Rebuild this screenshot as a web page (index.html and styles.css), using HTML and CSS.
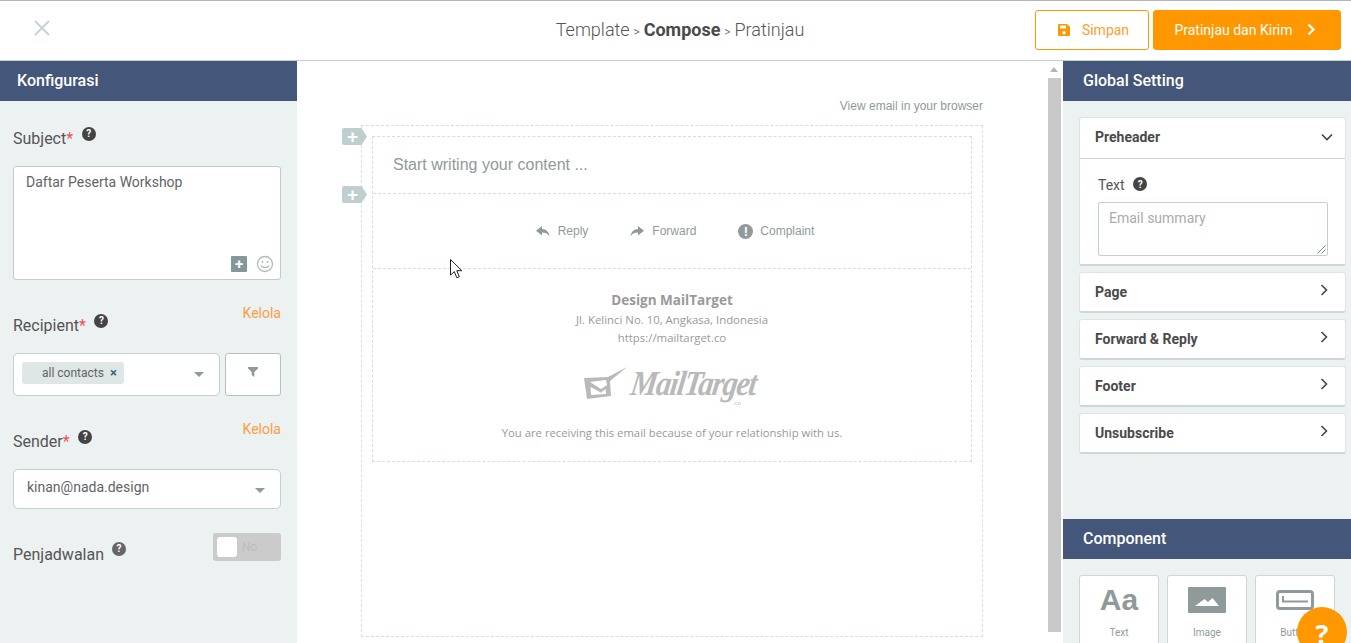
FILE: index.html
```html
<!DOCTYPE html>
<html lang="en">
<head>
    <meta charset="UTF-8">
    <title>Compose</title>
    <link rel="stylesheet" href="styles.css">
</head>
<body>

    <!-- Top bar -->
    <div class="topbar">
        <div class="topbar-left">
            <svg class="close-icon" width="16" height="16" viewBox="0 0 16 16"><path d="M1 1l14 14M15 1L1 15" stroke="#c3d4d4" stroke-width="2" fill="none"/></svg>
        </div>
        <div class="steps">Template <span class="step-sep">&gt;</span> <b>Compose</b> <span class="step-sep">&gt;</span> Pratinjau</div>
        <div class="topbar-right">
            <button class="btn btn-save">
                <svg width="12" height="12" viewBox="0 0 12 12"><path d="M1 0h8l3 3v8a1 1 0 0 1-1 1H1a1 1 0 0 1-1-1V1a1 1 0 0 1 1-1zm1 1.500v3h6v-3zM6 7a1.700 1.700 0 1 0 0 3.400A1.700 1.700 0 0 0 6 7z" fill="#ff9800" fill-rule="evenodd"/></svg>
                Simpan
            </button>
            <button class="btn btn-send">
                Pratinjau dan Kirim
                <svg width="9" height="13" viewBox="0 0 9 13"><path d="M1.500 1.500l5 5-5 5" stroke="#fff" stroke-width="2.200" fill="none"/></svg>
            </button>
        </div>
    </div>

    <div class="workspace">

        <!-- Left panel -->
        <div class="panel-left">
            <div class="panel-title">Konfigurasi</div>
            <div class="config-body">
                <div class="field-head field-head-first">
                    <div class="field-label">Subject<span class="req">*</span><span class="help">?</span></div>
                </div>
                <div class="subject-box">
                    Daftar Peserta Workshop
                    <div class="subject-tools">
                        <span class="tool-plus">+</span>
                        <svg width="18" height="18" viewBox="0 0 18 18"><circle cx="9" cy="9" r="7.500" fill="none" stroke="#b5b9b9" stroke-width="1.300"/><circle cx="6.500" cy="7" r="1" fill="#b5b9b9"/><circle cx="11.500" cy="7" r="1" fill="#b5b9b9"/><path d="M5 10.500c1 2.600 7 2.600 8 0" fill="none" stroke="#b5b9b9" stroke-width="1.200"/></svg>
                    </div>
                </div>

                <div class="field-head">
                    <div class="field-label">Recipient<span class="req">*</span><span class="help">?</span></div>
                    <a class="manage-link">Kelola</a>
                </div>
                <div class="recipient-row">
                    <div class="select select-recipient">
                        <span class="tag">all contacts <i class="tag-x">&times;</i></span>
                        <span class="caret"></span>
                    </div>
                    <div class="filter-btn">
                        <svg width="10" height="10" viewBox="0 0 10 10"><path d="M0 0h10v1.500L6.300 5v5L3.700 8V5L0 1.500z" fill="#8f9a9a"/></svg>
                    </div>
                </div>

                <div class="field-head">
                    <div class="field-label">Sender<span class="req">*</span><span class="help">?</span></div>
                    <a class="manage-link">Kelola</a>
                </div>
                <div class="select select-sender">
                    kinan@nada.design
                    <span class="caret"></span>
                </div>

                <div class="schedule-row">
                    <div class="field-label field-label-low">Penjadwalan<span class="help help-muted">?</span></div>
                    <div class="toggle"><span class="toggle-knob"></span>No</div>
                </div>
            </div>
        </div>

        <!-- Email canvas -->
        <div class="panel-center">
            <div class="canvas">
                <div class="view-browser">View email in your browser</div>
                <div class="email-outer">
                    <span class="add-tag add-tag-one">+</span>
                    <span class="add-tag add-tag-two">+</span>
                    <div class="email-inner">
                        <div class="block block-text">Start writing your content ...</div>
                        <div class="block block-actions">
                            <span class="action">
                                <svg width="14" height="11" viewBox="0 0 14 11"><path d="M6 0L0 4.800l6 4.700V6.600c3.300 0 5.600.8 7.500 4C13 6 10.500 3.200 6 3z" fill="#8f9a9a"/></svg>
                                Reply
                            </span>
                            <span class="action">
                                <svg width="14" height="11" viewBox="0 0 14 11"><path d="M8 0l6 4.800-6 4.700V6.600c-3.300 0-5.600.8-7.500 4C1 6 3.500 3.200 8 3z" fill="#8f9a9a"/></svg>
                                Forward
                            </span>
                            <span class="action action-complaint">
                                <span class="warn-icon">!</span>
                                Complaint
                            </span>
                        </div>
                        <div class="block block-footer">
                            <div class="org-name">Design MailTarget</div>
                            <div class="org-line">Jl. Kelinci No. 10, Angkasa, Indonesia</div>
                            <div class="org-line">https://mailtarget.co</div>
                            <div class="logo">
                                <svg width="46" height="34" viewBox="0 0 46 34"><path d="M1 11l24-1 19-10-17 14 1 15L4 32zM7 15l11 7 6-4-1-5zM7.500 20l.5 8 15-1-.2-5-5 3.500z" fill="#b9b9b9" fill-rule="evenodd"/></svg>
                                <span class="logo-text">MailTarget</span>
                                <span class="logo-co">.co</span>
                            </div>
                            <div class="org-line org-note">You are receiving this email because of your relationship with us.</div>
                        </div>
                    </div>
                </div>
            </div>
            <div class="scrollbar">
                <span class="scroll-up"></span>
                <div class="scroll-thumb"></div>
            </div>
        </div>

        <!-- Right panel -->
        <div class="panel-right">
            <div class="panel-title panel-title-right">Global Setting</div>
            <div class="settings">
                <div class="card">
                    <div class="card-head card-head-open">
                        Preheader
                        <svg width="12" height="8" viewBox="0 0 12 8"><path d="M1 1.500l5 5 5-5" stroke="#444" stroke-width="1.600" fill="none"/></svg>
                    </div>
                    <div class="card-body">
                        <div class="text-label">Text<span class="help">?</span></div>
                        <div class="summary-box">
                            Email summary
                            <svg class="resize-grip" width="9" height="9" viewBox="0 0 9 9"><path d="M8.500 0.500l-8 8M8.500 4.500l-4 4" stroke="#777" stroke-width="0.900" fill="none"/></svg>
                        </div>
                    </div>
                </div>
                <div class="card card-head">Page <svg class="chev" width="8" height="12" viewBox="0 0 8 12"><path d="M1.500 1l5 5-5 5" stroke="#444" stroke-width="1.600" fill="none"/></svg></div>
                <div class="card card-head">Forward &amp; Reply <svg class="chev" width="8" height="12" viewBox="0 0 8 12"><path d="M1.500 1l5 5-5 5" stroke="#444" stroke-width="1.600" fill="none"/></svg></div>
                <div class="card card-head">Footer <svg class="chev" width="8" height="12" viewBox="0 0 8 12"><path d="M1.500 1l5 5-5 5" stroke="#444" stroke-width="1.600" fill="none"/></svg></div>
                <div class="card card-head">Unsubscribe <svg class="chev" width="8" height="12" viewBox="0 0 8 12"><path d="M1.500 1l5 5-5 5" stroke="#444" stroke-width="1.600" fill="none"/></svg></div>
            </div>
            <div class="panel-title panel-title-right">Component</div>
            <div class="components">
                <div class="tile">
                    <span class="tile-aa">Aa</span>
                    <span class="tile-name">Text</span>
                </div>
                <div class="tile">
                    <svg width="38" height="26" viewBox="0 0 38 26"><path d="M1 0h36a1 1 0 0 1 1 1v24a1 1 0 0 1-1 1H1a1 1 0 0 1-1-1V1a1 1 0 0 1 1-1zm6 19h24l-6.500-8-4.500 4-3.500-3z" fill="#8f9a9a" fill-rule="evenodd"/></svg>
                    <span class="tile-name">Image</span>
                </div>
                <div class="tile">
                    <svg width="38" height="20" viewBox="0 0 38 20"><rect x="1.500" y="1.500" width="35" height="17" rx="2.500" fill="none" stroke="#8f9a9a" stroke-width="3"/><path d="M7 6v5.500h25" fill="none" stroke="#8f9a9a" stroke-width="2"/></svg>
                    <span class="tile-name">Button</span>
                </div>
            </div>
        </div>
    </div>

    <!-- Overlays -->
    <svg class="mouse-cursor" width="13" height="20" viewBox="0 0 13 20"><path d="M.5.500v15.500l3.800-3.300 2.500 6 2.500-1-2.500-6h5z" fill="#fff" stroke="#222" stroke-width="1"/></svg>
    <div class="help-fab">?</div>

</body>
</html>
```

FILE: styles.css
```css
* {
    box-sizing: border-box;
}

html, body {
    height: 100%;
}

body {
    margin: 0;
    overflow: hidden;
    font-family: 'Roboto', sans-serif;
    color: #555;
    background-color: white;
}

/* Top bar */
.topbar {
    height: 61px;
    display: flex;
    align-items: center;
    padding: 0 10px 0 0;
    border-top: 1px solid #b5b5b5;
    border-bottom: 1px solid #c2d0d0;
}

.topbar-left {
    flex: 1;
    padding-bottom: 6px;
    display: flex;
}

.close-icon {
    margin-left: 34px;
}

.topbar-right {
    flex: 1;
    display: flex;
    justify-content: flex-end;
    gap: 4px;
}

.steps {
    margin-left: 19px;
    margin-bottom: 2px;
    font-size: 18px;
    font-weight: 300;
    word-spacing: -0.500px;
    color: #555;
}

.steps b {
    font-weight: 700;
    color: #4a4a4a;
}

.step-sep {
    font-size: 12px;
}

.btn {
    height: 40px;
    margin-bottom: 2px;
    border-radius: 3px;
    font-family: 'Roboto', sans-serif;
    font-size: 14px;
    display: flex;
    align-items: center;
    justify-content: center;
}

.btn-save {
    width: 114px;
    padding: 0 0 0 3px;
    gap: 12px;
    background-color: white;
    color: #ff9d2e;
    border: 1px solid #ff9800;
}

.btn-send {
    width: 188px;
    padding: 0 4px 0 0;
    gap: 14px;
    background-color: #ff9800;
    color: white;
    border: 1px solid #ff9800;
}

/* Main columns */
.workspace {
    display: flex;
    height: 582px;
}

.panel-left {
    width: 297px;
    background-color: #ecf1f1;
}

.panel-center {
    width: 766px;
    display: flex;
}

.panel-right {
    width: 288px;
    background-color: #ecf1f1;
}

.panel-title {
    height: 40px;
    padding: 0 0 2px 17px;
    display: flex;
    align-items: center;
    background-color: #44567a;
    color: white;
    font-size: 16px;
    font-weight: 500;
}

.panel-title-right {
    padding-left: 20px;
}

/* Left panel form */
.config-body {
    padding: 25px 16px 0 13px;
}

.field-head {
    height: 35px;
    margin-top: 23px;
    margin-bottom: 15px;
    display: flex;
    justify-content: space-between;
    align-items: flex-end;
}

.field-head-first {
    height: 25px;
    margin-top: 0;
}

.field-label {
    font-size: 16px;
    line-height: 24px;
    color: #555;
    display: flex;
}

.field-label-low {
    margin-bottom: -1px;
}

.req {
    color: #f0505a;
}

.help {
    width: 14px;
    height: 14px;
    margin: 0 0 0 8.500px;
    display: inline-flex;
    align-items: center;
    justify-content: center;
    border-radius: 50%;
    background-color: #444;
    color: white;
    font-size: 10px;
    font-weight: 700;
}

.help-muted {
    background-color: #666;
    margin-top: -1px;
    margin-left: 8px;
}

.manage-link {
    align-self: flex-start;
    font-size: 14px;
    line-height: 20px;
    color: #ff9d45;
}

.subject-box {
    position: relative;
    height: 114px;
    padding: 7px 12px;
    background-color: white;
    border: 1px solid #c8c8c8;
    border-radius: 3px;
    font-size: 14px;
    color: #5f6468;
}

.subject-tools {
    position: absolute;
    right: 6px;
    bottom: 6px;
    display: flex;
    align-items: center;
    gap: 9px;
}

.tool-plus {
    width: 16px;
    height: 16px;
    display: flex;
    align-items: center;
    justify-content: center;
    background-color: #86979b;
    color: white;
    font-weight: 700;
    font-size: 15px;
    border-radius: 1px;
}

.recipient-row {
    display: flex;
    gap: 5px;
}

.select {
    position: relative;
    display: flex;
    align-items: center;
    background-color: white;
    border: 1px solid #c2d0d0;
    border-radius: 5px;
    font-size: 14px;
    color: #5f6468;
}

.select-recipient {
    width: 207px;
    height: 43px;
    padding-left: 8px;
}

.select-sender {
    height: 40px;
    padding: 0 13px 5px;
}

.caret {
    position: absolute;
    right: 15px;
    top: 18px;
    width: 0;
    height: 0;
    border-left: 5px solid transparent;
    border-right: 5px solid transparent;
    border-top: 5px solid #8f9a9a;
}

.tag {
    height: 22px;
    width: 102px;
    margin-bottom: 4px;
    padding-left: 20px;
    display: flex;
    align-items: center;
    gap: 6px;
    background-color: #dfe6e6;
    border-radius: 3px;
    font-size: 12px;
}

.tag-x {
    font-style: normal;
    font-weight: 700;
    font-size: 13px;
    color: #2f6b6b;
}

.filter-btn {
    width: 56px;
    height: 43px;
    padding-bottom: 6px;
    display: flex;
    align-items: center;
    justify-content: center;
    background-color: white;
    border: 1px solid #b5c2c2;
    border-radius: 3px;
}

.schedule-row {
    height: 33px;
    margin-top: 24px;
    display: flex;
    justify-content: space-between;
    align-items: flex-end;
}

.toggle {
    width: 68px;
    height: 28px;
    align-self: flex-start;
    padding: 3px 4px;
    display: flex;
    gap: 5px;
    align-items: center;
    background-color: #cbcbcb;
    border-radius: 3px;
    color: #bdbdbd;
    font-size: 12px;
}

.toggle-knob {
    width: 20px;
    height: 20px;
    background-color: white;
    border-radius: 3px;
}

/* Email canvas */
.canvas {
    width: 751px;
    padding: 38px 0 0 64px;
}

.view-browser {
    width: 622px;
    height: 26px;
    text-align: right;
    font-family: 'Liberation Sans', sans-serif;
    font-size: 12px;
    line-height: 14px;
    color: #8f9a9a;
}

.email-outer {
    position: relative;
    width: 622px;
    height: 512px;
    padding: 10px;
    border: 1px dashed #d5dfdf;
}

.add-tag {
    position: absolute;
    left: -20px;
    width: 25px;
    height: 17px;
    padding-right: 4px;
    display: flex;
    align-items: center;
    justify-content: center;
    background-color: #bfcfcf;
    color: white;
    font-family: 'Liberation Sans', sans-serif;
    font-weight: 700;
    font-size: 19px;
    clip-path: polygon(0 0, 78% 0, 100% 50%, 78% 100%, 0 100%);
    border-radius: 2px;
}

.add-tag-one {
    top: 2px;
}

.add-tag-two {
    top: 60px;
}

.email-inner {
    border: 1px dashed #d5dfdf;
}

.block {
    border-bottom: 1px dashed #d5dfdf;
}

.block-text {
    height: 57px;
    padding: 19px 0 0 20px;
    font-family: 'Liberation Sans', sans-serif;
    font-size: 16px;
    color: #8f9a9a;
}

.block-actions {
    height: 75px;
    padding: 0 0 0 6px;
    display: flex;
    align-items: center;
    justify-content: center;
    gap: 42px;
    font-family: 'Liberation Sans', sans-serif;
    font-size: 12px;
    color: #8f9a9a;
}

.action {
    display: flex;
    align-items: center;
    gap: 8px;
}

.action-complaint {
    gap: 7px;
}

.warn-icon {
    width: 15px;
    height: 15px;
    display: flex;
    align-items: center;
    justify-content: center;
    border-radius: 50%;
    background-color: #8f9a9a;
    color: white;
    font-weight: 700;
    font-size: 13px;
}

.block-footer {
    height: 192px;
    padding-top: 22px;
    border-bottom: none;
    text-align: center;
    font-family: 'Open Sans', sans-serif;
    color: #999;
}

.org-name {
    margin-bottom: 2px;
    font-size: 13.500px;
    font-weight: 700;
    line-height: 18px;
}

.org-line {
    font-size: 11.400px;
    line-height: 18px;
}

.org-note {
    font-size: 11.300px;
}

.logo {
    position: relative;
    height: 44px;
    margin: 15px 0 18px;
    padding-right: 4px;
    display: flex;
    align-items: center;
    justify-content: center;
    gap: 2px;
}

.logo-text {
    margin: 0 -10px;
    font-family: 'Liberation Serif', serif;
    font-style: italic;
    font-weight: 700;
    font-size: 35px;
    letter-spacing: -1.500px;
    color: #b9b9b9;
    display: inline-block;
    transform: skewX(-8deg) scaleX(0.86);
}

.logo-co {
    position: absolute;
    left: 360px;
    top: 37px;
    font-size: 6px;
    color: #b9b9b9;
}

/* Scrollbar */
.scrollbar {
    position: relative;
    width: 13px;
    padding-top: 17px;
}

.scroll-up {
    position: absolute;
    top: 6px;
    left: 2px;
    width: 0;
    height: 0;
    border-left: 4px solid transparent;
    border-right: 4px solid transparent;
    border-bottom: 5px solid #b5b5b5;
}

.scroll-thumb {
    height: 554px;
    background-color: #c8c8c8;
}

/* Right panel */
.settings {
    height: 418px;
    padding: 16px 5px 0 16px;
    display: flex;
    flex-direction: column;
    gap: 6px;
}

.card {
    background-color: white;
    border: 1px solid #dfe4e4;
    border-bottom: 2px solid #cfd6d6;
    border-radius: 3px;
}

.card-head {
    height: 41px;
    padding: 0 14px 0 15px;
    display: flex;
    align-items: center;
    justify-content: space-between;
    font-size: 14px;
    font-weight: 700;
    color: #4a4a4a;
}

.card-head-open {
    padding-bottom: 2px;
    border-bottom: 1px solid #c8d2d2;
}

.card-head-open svg {
    margin-right: -2px;
}

.chev {
    margin: 0 3px 4px 0;
}

.card-body {
    height: 105px;
    padding: 18px 17px 0 18px;
}

.text-label {
    display: flex;
    font-size: 14px;
    line-height: 17px;
    color: #555;
}

.summary-box {
    position: relative;
    height: 54px;
    margin-top: 8px;
    padding: 7px 10px;
    border: 1px solid #c2d0d0;
    border-radius: 2px;
    font-size: 14px;
    color: #a9adad;
}

.resize-grip {
    position: absolute;
    right: 1px;
    bottom: 1px;
}

.components {
    padding: 16px 0 0 16px;
    display: flex;
    gap: 8px;
}

.tile {
    width: 80px;
    height: 90px;
    padding-top: 11px;
    display: flex;
    flex-direction: column;
    align-items: center;
    background-color: white;
    border: 1px solid #cfd6d6;
    border-radius: 3px;
}

.tile svg {
    height: 26px;
    margin-bottom: 14px;
}

.tile-aa {
    height: 26px;
    margin-bottom: 14px;
    font-family: 'Liberation Sans', sans-serif;
    font-weight: 700;
    font-size: 30px;
    line-height: 26px;
    color: #8f9a9a;
}

.tile-name {
    font-size: 10px;
    color: #8f9a9a;
}

/* Overlays */
.mouse-cursor {
    position: absolute;
    left: 450px;
    top: 259px;
}

.help-fab {
    position: absolute;
    left: 1297px;
    top: 607px;
    width: 50px;
    height: 50px;
    padding-top: 2px;
    display: flex;
    align-items: center;
    justify-content: center;
    border-radius: 50%;
    background-color: #ff9800;
    color: white;
    font-family: 'Open Sans', sans-serif;
    font-weight: 700;
    font-size: 27px;
}
```
